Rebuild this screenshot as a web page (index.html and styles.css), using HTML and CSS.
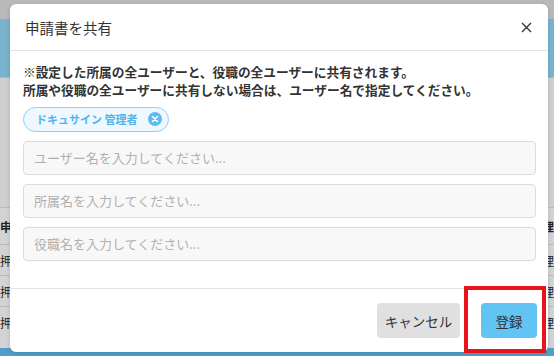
FILE: index.html
```html
<!DOCTYPE html>
<html lang="ja">
<head>
    <meta charset="UTF-8">
    <meta name="viewport" content="width=device-width, initial-scale=1.0">
    <title>申請書を共有</title>
    <link rel="stylesheet" href="styles.css">
</head>
<body>
    <!-- page behind the overlay -->
    <div class="page">
        <div class="topbar"></div>
        <div class="header-band"></div>
        <div class="toolbar"></div>
        <div class="table">
            <div class="row head"><span>申請</span><span>理</span></div>
            <div class="row"><span>押印</span><span>理</span></div>
            <div class="row"><span>押印</span><span>理</span></div>
            <div class="row"><span>押印</span><span>理</span></div>
        </div>
        <div class="footer-band"></div>
    </div>

    <div class="modal">
        <div class="modal-header">
            <h2>申請書を共有</h2>
            <svg class="close" width="11" height="11" viewBox="0 0 11 11">
                <path d="M1 1 L10 10 M10 1 L1 10" stroke="#333" stroke-width="1.4"/>
            </svg>
        </div>
        <div class="modal-body">
            <p class="note">※設定した所属の全ユーザーと、役職の全ユーザーに共有されます。<br>所属や役職の全ユーザーに共有しない場合は、ユーザー名で指定してください。</p>
            <div class="chips">
                <span class="chip">ドキュサイン 管理者
                    <svg class="chip-x" width="14" height="14" viewBox="0 0 14 14">
                        <circle cx="7" cy="7" r="7" fill="#5bbdf0"/>
                        <path d="M4.5 4.5 L9.5 9.5 M9.5 4.5 L4.5 9.5" stroke="#fff" stroke-width="1.6" stroke-linecap="round"/>
                    </svg>
                </span>
            </div>
            <input class="field" type="text" placeholder="ユーザー名を入力してください...">
            <input class="field" type="text" placeholder="所属名を入力してください...">
            <input class="field" type="text" placeholder="役職名を入力してください...">
        </div>
        <div class="modal-footer">
            <button class="btn cancel">キャンセル</button>
            <button class="btn submit">登録</button>
        </div>
    </div>

    <div class="highlight"></div>
</body>
</html>
```

FILE: styles.css
```css
body {
    margin: 0;
    font-family: "Noto Sans CJK JP", "Noto Sans", sans-serif;
    color: #333;
    background: #cbcbcb;
    width: 554px;
    height: 356px;
    overflow: hidden;
    position: relative;
}
.page {
    display: flex;
    flex-direction: column;
    height: 356px;
}
.topbar {
    height: 19px;
    background: #b9b9b9;
}
.header-band {
    height: 58px;
    background: #79b3ce;
}
.toolbar {
    height: 130px;
    background: #cfcfcf;
    border-top: 1px solid #b4b4b4;
    box-sizing: border-box;
}
.table {
    flex: 1;
    background: #d3d3d3;
}
.row {
    display: flex;
    justify-content: space-between;
    height: 30px;
    align-items: center;
    border-top: 1px solid #bbbbbb;
    font-size: 12px;
    color: #222;
}
.row.head {
    height: 36px;
    font-weight: bold;
}
.footer-band {
    height: 8px;
    background: #4f9fc8;
}
.modal {
    position: absolute;
    left: 10px;
    top: 4px;
    width: 538px;
    height: 348px;
    background: #fff;
    border-radius: 6px;
    display: flex;
    flex-direction: column;
    box-shadow: 0 1px 4px rgba(0, 0, 0, 0.15);
}
.modal-header {
    height: 46px;
    flex-shrink: 0;
    display: flex;
    align-items: center;
    justify-content: space-between;
    padding: 0 16px 0 15px;
    border-bottom: 1px solid #e3e3e3;
}
.modal-header h2 {
    margin: 0;
    font-size: 14.5px;
    font-weight: normal;
    color: #333;
}
.close {
    display: block;
}
.modal-body {
    padding: 12px 12px 0 13px;
    display: flex;
    flex-direction: column;
    gap: 9px;
    height: 238px;
    flex-shrink: 0;
    box-sizing: border-box;
    border-bottom: 1px solid #e3e3e3;
}
.note {
    margin: 0;
    font-size: 12.7px;
    font-weight: bold;
    line-height: 18px;
    color: #333;
}
.chips {
    margin-top: -3px;
    margin-bottom: 0;
}
.chip {
    display: inline-flex;
    align-items: center;
    gap: 10px;
    height: 25px;
    box-sizing: border-box;
    padding: 0 6px 0 12px;
    border: 1px solid #8fd1f4;
    border-radius: 13px;
    background: #eef8fe;
    color: #4db6ec;
    font-size: 11px;
    font-weight: bold;
}
.chip-x {
    display: block;
}
.field {
    height: 34px;
    flex-shrink: 0;
    box-sizing: border-box;
    border: 1px solid #dcdcdc;
    border-radius: 4px;
    background: #f8f8f8;
    padding: 0 10px;
    font-family: inherit;
    font-size: 13px;
    color: #333;
    outline: none;
}
.field::placeholder {
    color: #b0b0b0;
}
.modal-footer {
    flex: 1;
    display: flex;
    justify-content: flex-end;
    align-items: center;
    gap: 21px;
    padding: 0 11px 0 0;
}
.btn {
    height: 35px;
    border: none;
    border-radius: 4px;
    font-family: inherit;
    font-size: 13.5px;
    color: #333;
}
.btn.cancel {
    width: 83px;
    background: #e0e0e0;
}
.btn.submit {
    width: 56px;
    background: #62c4f2;
}
.highlight {
    position: absolute;
    left: 464px;
    top: 286px;
    width: 82px;
    height: 67px;
    box-sizing: border-box;
    border: 4px solid #e8141c;
}
```
